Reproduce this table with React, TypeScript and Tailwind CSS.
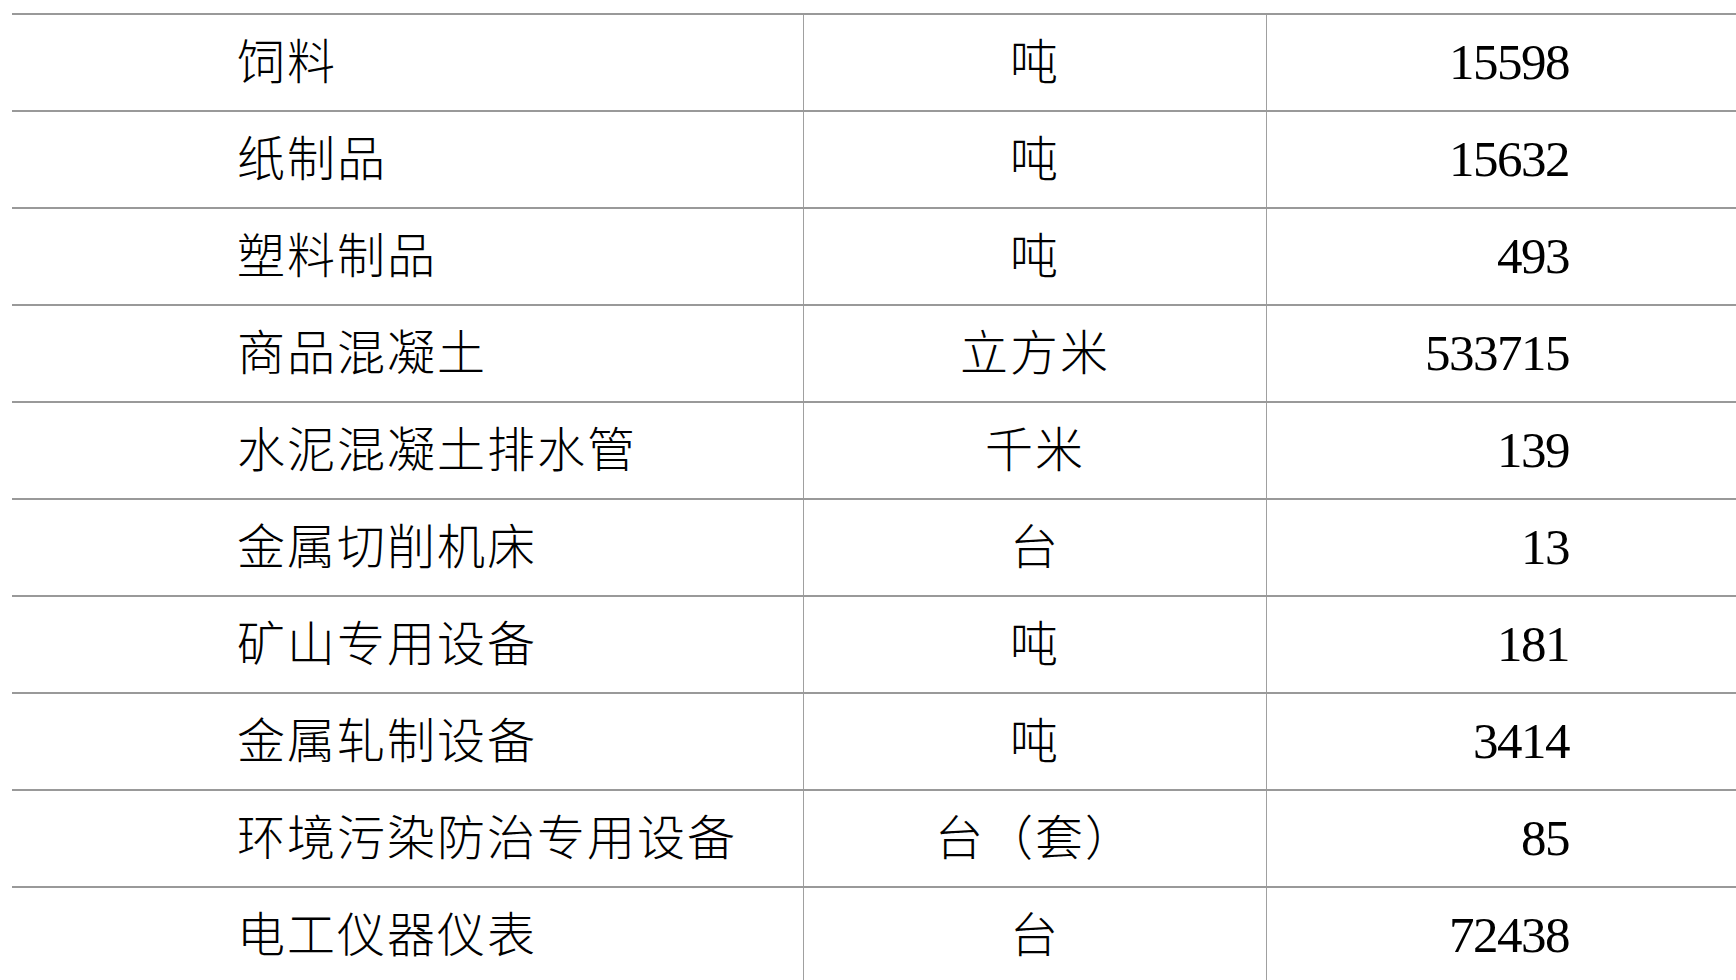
import React from "react";

const rows = [
    { name: "饲料", unit: "吨", value: "15598" },
    { name: "纸制品", unit: "吨", value: "15632" },
    { name: "塑料制品", unit: "吨", value: "493" },
    { name: "商品混凝土", unit: "立方米", value: "533715" },
    { name: "水泥混凝土排水管", unit: "千米", value: "139" },
    { name: "金属切削机床", unit: "台", value: "13" },
    { name: "矿山专用设备", unit: "吨", value: "181" },
    { name: "金属轧制设备", unit: "吨", value: "3414" },
    { name: "环境污染防治专用设备", unit: "台（套）", value: "85" },
    { name: "电工仪器仪表", unit: "台", value: "72438" },
];

const cjk = { fontFamily: '"Noto Sans CJK SC", sans-serif' };
const num = { fontFamily: '"Liberation Serif", serif' };

const App = () => {
    return (
        <div className="min-h-screen bg-white pt-[13px] pl-[12px] overflow-hidden text-black">
            <div className="border-t-2 border-[#999999]">
                {rows.map((row) => (
                    <div key={row.name} className="flex h-[97px] border-b-2 border-[#999999]">
                        {/* name */}
                        <div
                            className="w-[792px] shrink-0 flex items-center pl-[225px] pb-[10px] border-r border-[#a0a0a0] text-[48px] font-light tracking-[2px]"
                            style={cjk}
                        >
                            {row.name}
                        </div>
                        {/* unit */}
                        <div
                            className="w-[463px] shrink-0 flex items-center justify-center pb-[10px] border-r border-[#a0a0a0] text-[48px] font-light tracking-[2px]"
                            style={cjk}
                        >
                            {row.unit}
                        </div>
                        {/* value */}
                        <div
                            className="flex-1 flex items-center justify-end pr-[167px] text-[51px] tracking-[-1.5px]"
                            style={num}
                        >
                            {row.value}
                        </div>
                    </div>
                ))}
            </div>
        </div>
    );
};

export default App;
